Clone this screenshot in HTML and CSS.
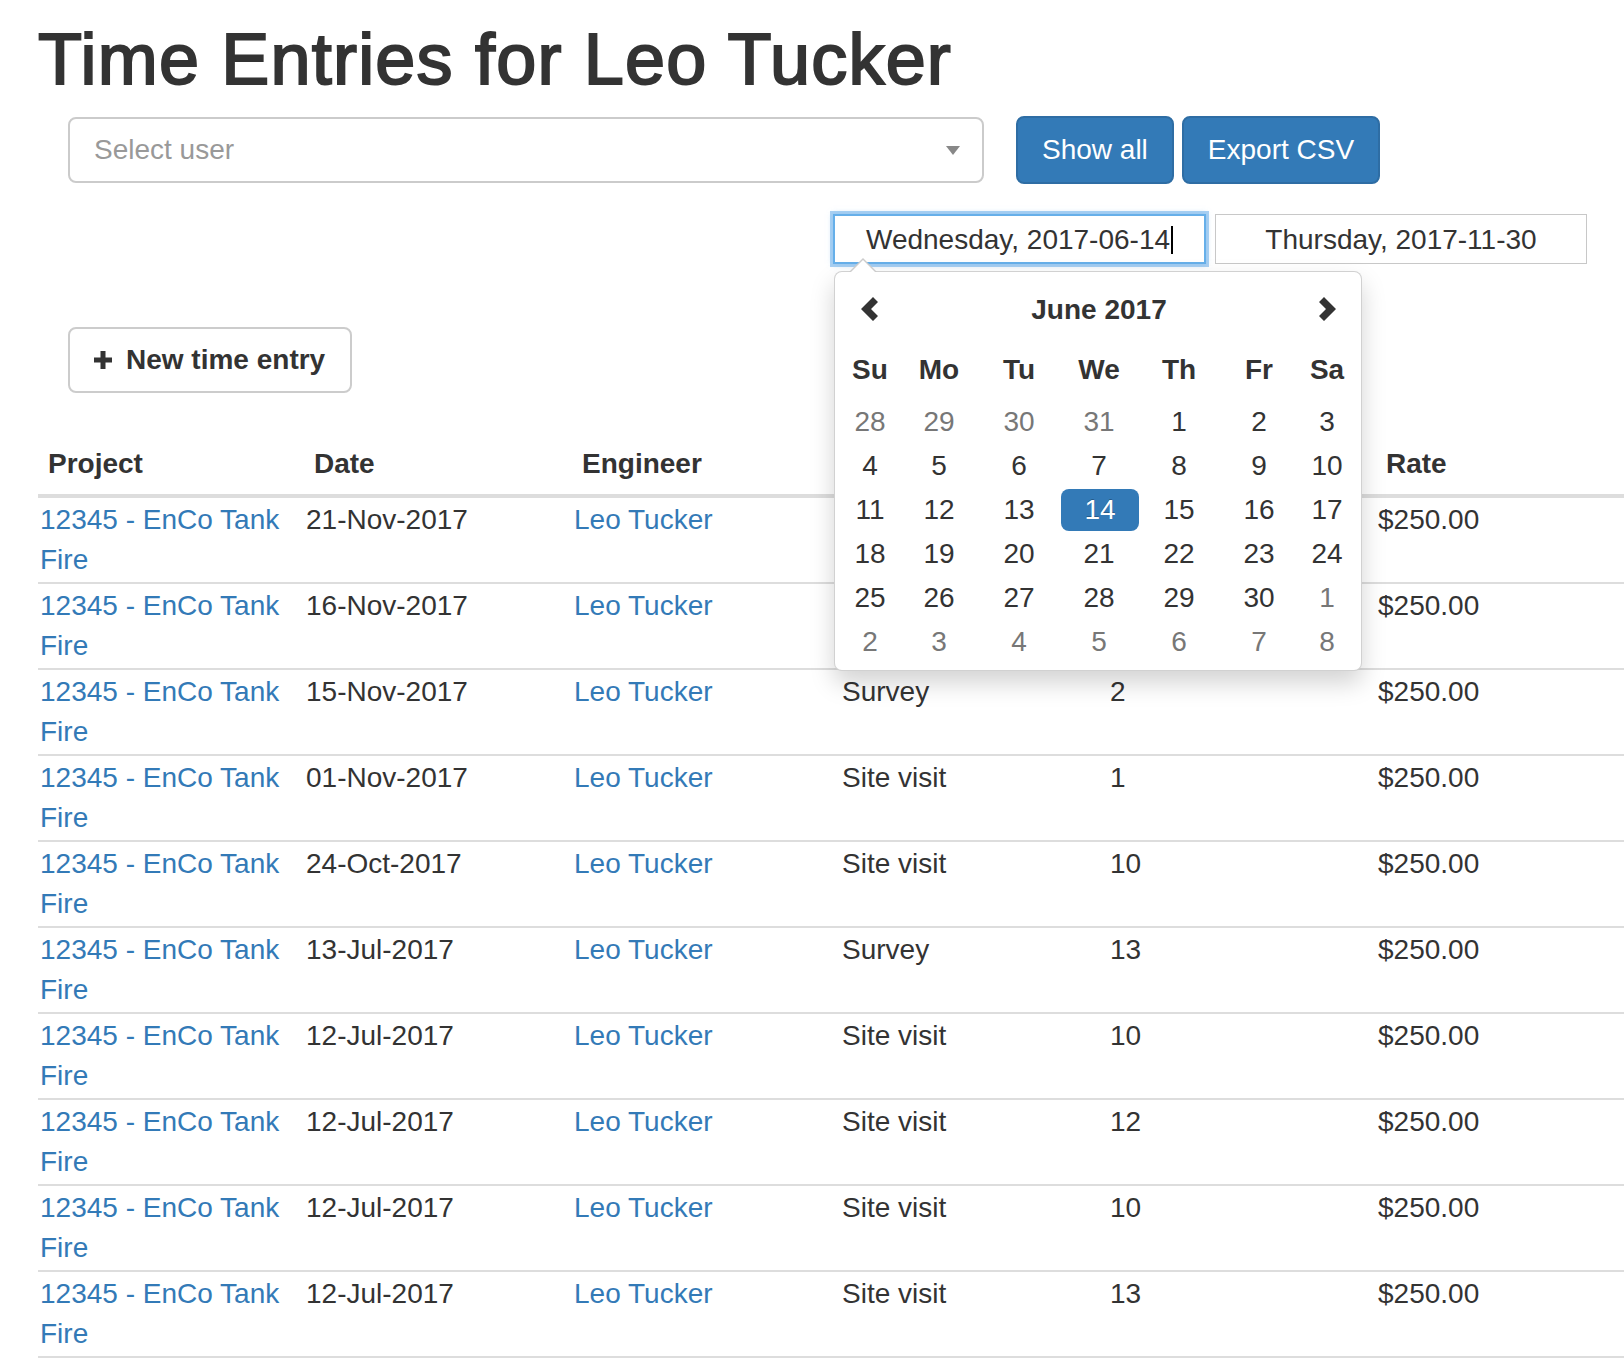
FILE: index.html
```html
<!DOCTYPE html>
<html lang="en">
<head>
<meta charset="utf-8">
<title>Time Entries for Leo Tucker</title>
<link rel="stylesheet" href="styles.css">
</head>
<body>
<div class="page">
  <h1 class="title">Time Entries for Leo Tucker</h1>

  <div class="toolbar">
    <div class="select"><span class="placeholder">Select user</span><span class="select-caret"></span></div>
    <div class="btn-group">
      <button class="btn btn-primary">Show all</button>
      <button class="btn btn-primary">Export CSV</button>
    </div>
  </div>

  <div class="dates">
    <div class="date-field">
      <div class="date-input focused">Wednesday, 2017-06-14<span class="cursor"></span></div>
      <div class="picker">
        <div class="cal">
          <div class="cal-nav"><svg width="18" height="24" viewBox="0 0 18 24"><polygon points="12,0 17,5 10,12 17,19 12,24 0,12" fill="#333"/></svg></div>
          <div class="cal-title">June 2017</div>
          <div class="cal-nav"><svg width="18" height="24" viewBox="0 0 18 24"><polygon points="6,0 1,5 8,12 1,19 6,24 18,12" fill="#333"/></svg></div>

          <div class="dow">Su</div><div class="dow">Mo</div><div class="dow">Tu</div><div class="dow">We</div><div class="dow">Th</div><div class="dow">Fr</div><div class="dow">Sa</div>

          <div class="day muted">28</div><div class="day muted">29</div><div class="day muted">30</div><div class="day muted">31</div><div class="day">1</div><div class="day">2</div><div class="day">3</div>
          <div class="day">4</div><div class="day">5</div><div class="day">6</div><div class="day">7</div><div class="day">8</div><div class="day">9</div><div class="day">10</div>
          <div class="day">11</div><div class="day">12</div><div class="day">13</div><div class="day active">14</div><div class="day">15</div><div class="day">16</div><div class="day">17</div>
          <div class="day">18</div><div class="day">19</div><div class="day">20</div><div class="day">21</div><div class="day">22</div><div class="day">23</div><div class="day">24</div>
          <div class="day">25</div><div class="day">26</div><div class="day">27</div><div class="day">28</div><div class="day">29</div><div class="day">30</div><div class="day muted">1</div>
          <div class="day muted">2</div><div class="day muted">3</div><div class="day muted">4</div><div class="day muted">5</div><div class="day muted">6</div><div class="day muted">7</div><div class="day muted">8</div>
        </div>
      </div>
    </div>
    <div class="date-input">Thursday, 2017-11-30</div>
  </div>

  <div class="actions">
    <button class="btn btn-default"><svg class="plus" width="18" height="18" viewBox="0 0 18 18"><rect x="6.5" y="0" width="5" height="18" fill="#333"/><rect x="0" y="6.5" width="18" height="5" fill="#333"/></svg><span>New time entry</span></button>
  </div>

  <table class="entries">
    <colgroup>
      <col class="c-project"><col class="c-date"><col class="c-eng"><col class="c-desc"><col class="c-hours"><col class="c-rate">
    </colgroup>
    <thead>
      <tr><th>Project</th><th>Date</th><th>Engineer</th><th></th><th></th><th>Rate</th></tr>
    </thead>
    <tbody>
      <tr><td><a href="#">12345 - EnCo Tank Fire</a></td><td>21-Nov-2017</td><td><a href="#">Leo Tucker</a></td><td></td><td></td><td>$250.00</td></tr>
      <tr><td><a href="#">12345 - EnCo Tank Fire</a></td><td>16-Nov-2017</td><td><a href="#">Leo Tucker</a></td><td></td><td></td><td>$250.00</td></tr>
      <tr><td><a href="#">12345 - EnCo Tank Fire</a></td><td>15-Nov-2017</td><td><a href="#">Leo Tucker</a></td><td>Survey</td><td>2</td><td>$250.00</td></tr>
      <tr><td><a href="#">12345 - EnCo Tank Fire</a></td><td>01-Nov-2017</td><td><a href="#">Leo Tucker</a></td><td>Site visit</td><td>1</td><td>$250.00</td></tr>
      <tr><td><a href="#">12345 - EnCo Tank Fire</a></td><td>24-Oct-2017</td><td><a href="#">Leo Tucker</a></td><td>Site visit</td><td>10</td><td>$250.00</td></tr>
      <tr><td><a href="#">12345 - EnCo Tank Fire</a></td><td>13-Jul-2017</td><td><a href="#">Leo Tucker</a></td><td>Survey</td><td>13</td><td>$250.00</td></tr>
      <tr><td><a href="#">12345 - EnCo Tank Fire</a></td><td>12-Jul-2017</td><td><a href="#">Leo Tucker</a></td><td>Site visit</td><td>10</td><td>$250.00</td></tr>
      <tr><td><a href="#">12345 - EnCo Tank Fire</a></td><td>12-Jul-2017</td><td><a href="#">Leo Tucker</a></td><td>Site visit</td><td>12</td><td>$250.00</td></tr>
      <tr><td><a href="#">12345 - EnCo Tank Fire</a></td><td>12-Jul-2017</td><td><a href="#">Leo Tucker</a></td><td>Site visit</td><td>10</td><td>$250.00</td></tr>
      <tr><td><a href="#">12345 - EnCo Tank Fire</a></td><td>12-Jul-2017</td><td><a href="#">Leo Tucker</a></td><td>Site visit</td><td>13</td><td>$250.00</td></tr>
    </tbody>
  </table>
</div>
</body>
</html>
```

FILE: styles.css
```css
html, body {
  margin: 0;
  padding: 0;
  background: #fff;
  overflow: hidden;
}

.page {
  padding: 20px 0 0 38px;
  font-family: "Liberation Sans", Arial, Helvetica, sans-serif;
  font-size: 28px;
  line-height: 40px;
  color: #333;
}

.title {
  margin: 0;
  font-size: 72px;
  line-height: 79px;
  font-weight: 400;
  letter-spacing: 1.2px;
  -webkit-text-stroke: 2px #333;
  color: #333;
}

/* toolbar */
.toolbar {
  display: flex;
  align-items: center;
  margin-top: 17px;
  padding-left: 30px;
}

.select {
  box-sizing: border-box;
  width: 916px;
  height: 66px;
  border: 2px solid #cbcbcb;
  border-radius: 8px;
  padding: 0 22px 0 24px;
  display: flex;
  align-items: center;
  justify-content: space-between;
  background: #fff;
}

.placeholder {
  color: #999;
}

.select-caret {
  width: 0;
  height: 0;
  border-left: 7px solid transparent;
  border-right: 7px solid transparent;
  border-top: 9px solid #888;
}

.btn-group {
  display: flex;
  gap: 8px;
  margin-left: 32px;
}

.btn {
  box-sizing: border-box;
  height: 68px;
  padding: 0 24px;
  border: 2px solid transparent;
  border-radius: 8px;
  font-family: inherit;
  font-size: 28px;
  line-height: 40px;
  cursor: pointer;
}

.btn-primary {
  background: #337ab7;
  border-color: #2e6da4;
  color: #fff;
}

.btn-default {
  display: flex;
  align-items: center;
  gap: 14px;
  height: 66px;
  padding: 0 25px 0 24px;
  background: #fff;
  border-color: #ccc;
  color: #333;
  font-weight: 700;
}

.plus {
  display: block;
}

/* dates */
.dates {
  display: flex;
  gap: 9px;
  margin-top: 30px;
  padding-left: 795px;
}

.date-field {
  position: relative;
}

.date-input {
  box-sizing: border-box;
  width: 372px;
  height: 50px;
  border: 1px solid #c8c8c8;
  padding-top: 5px;
  text-align: center;
  line-height: 40px;
  color: #333;
  background: #fff;
}

.date-input.focused {
  width: 373px;
  border: 2px solid #66afe9;
  padding-top: 4px;
  box-shadow: 0 0 0 3px rgba(140, 192, 238, 0.75), 0 0 6px rgba(102, 175, 233, 0.6);
}

.cursor {
  display: inline-block;
  width: 2px;
  height: 28px;
  background: #000;
  vertical-align: -5px;
  margin-left: 1px;
}

/* date picker popup */
.picker {
  position: absolute;
  top: 57px;
  left: 1px;
  z-index: 10;
  box-sizing: border-box;
  width: 528px;
  padding: 8px 6px 6px;
  background: #fff;
  border: 1px solid rgba(0, 0, 0, 0.18);
  border-radius: 8px;
  box-shadow: 0 12px 24px rgba(0, 0, 0, 0.175);
}

.picker::before {
  content: "";
  position: absolute;
  top: -14px;
  left: 14px;
  border-left: 14px solid transparent;
  border-right: 14px solid transparent;
  border-bottom: 14px solid #ccc;
}

.picker::after {
  content: "";
  position: absolute;
  top: -12px;
  left: 16px;
  border-left: 12px solid transparent;
  border-right: 12px solid transparent;
  border-bottom: 12px solid #fff;
}

.cal {
  display: grid;
  grid-template-columns: 58px repeat(5, 80px) 56px;
  grid-template-rows: 60px 60px repeat(6, 44px);
  text-align: center;
}

.cal-nav,
.cal-title,
.dow,
.day {
  display: flex;
  align-items: center;
  justify-content: center;
}

.cal-nav svg {
  display: block;
  margin-top: -2px;
}

.cal-title {
  grid-column: span 5;
  font-weight: 700;
}

.dow {
  font-weight: 700;
}

.day {
  color: #333;
}

.day.muted {
  color: #777;
}

.day.active {
  margin: 1px 0 1px 2px;
  background: #337ab7;
  color: #fff;
  border-radius: 8px;
  text-shadow: 0 -1px 0 rgba(0, 0, 0, 0.25);
}

/* table */
.actions {
  display: flex;
  margin-top: 63px;
  padding-left: 30px;
}

.entries {
  margin-top: 41px;
  width: 1586px;
  table-layout: fixed;
  border-collapse: separate;
  border-spacing: 0;
}

.c-project { width: 266px; }
.c-date { width: 268px; }
.c-eng { width: 268px; }
.c-desc { width: 268px; }
.c-hours { width: 268px; }
.c-rate { width: 248px; }

.entries th {
  text-align: left;
  font-weight: 700;
  padding: 10px 2px 10px 10px;
  line-height: 40px;
  border-bottom: 4px solid #ddd;
}

.entries td {
  vertical-align: top;
  padding: 2px 2px;
  line-height: 40px;
  border-bottom: 2px solid #ddd;
}

.entries a {
  color: #337ab7;
  text-decoration: none;
}
```
